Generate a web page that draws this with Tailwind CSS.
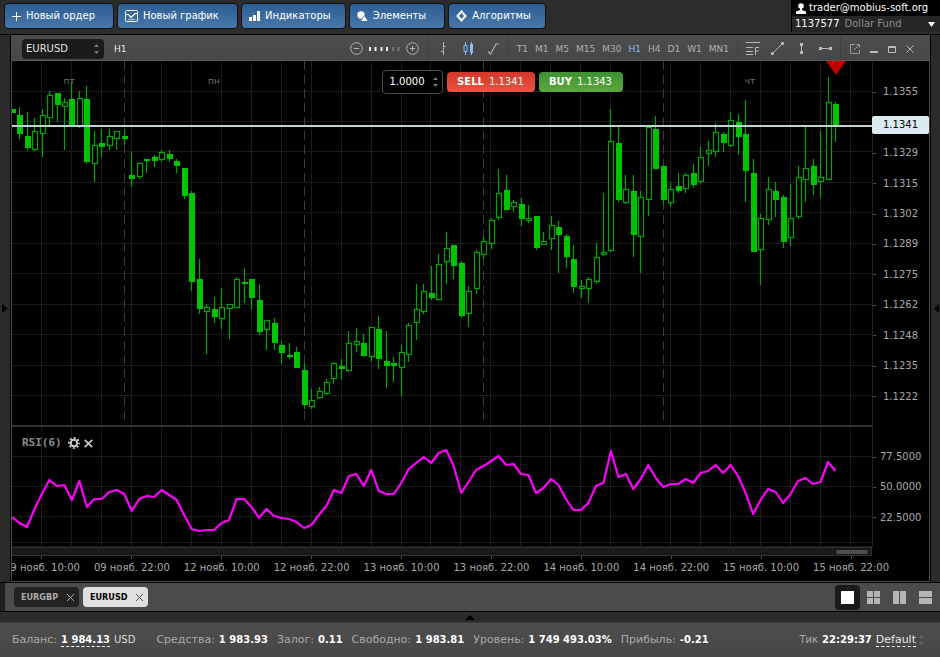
<!DOCTYPE html>
<html lang="ru">
<head>
<meta charset="utf-8">
<title>EURUSD, H1</title>
<script src="https://cdn.jsdelivr.net/npm/@tailwindcss/browser@4"></script>
</head>
<body class="bg-black">
<div class="flex h-screen flex-col overflow-hidden font-['DejaVu_Sans',sans-serif] text-[10px] leading-4 text-[#a8a8a8]">

  <!-- Top bar -->
  <header class="flex h-[35px] shrink-0 justify-between border-b border-black bg-[#2c2c2c]">
    <nav class="flex gap-[3px] pt-[3px] pl-1 text-[10px] text-white">
      <button class="flex h-[26px] items-center gap-[5px] rounded-sm border border-[#111] bg-linear-to-b from-[#2d5d92] to-[#4877ab] pr-[18px] pl-[7px]">
        <svg class="size-[9px]" viewBox="0 0 9 9" stroke="#fff" fill="none"><path d="M4.5 0v9M0 4.5h9"/></svg>Новый ордер</button>
      <button class="flex h-[26px] items-center gap-[5px] rounded-sm border border-[#111] bg-linear-to-b from-[#2d5d92] to-[#4877ab] pr-[18px] pl-[7px]">
        <svg class="h-3 w-[13px]" viewBox="0 0 13 12" stroke="#fff" fill="none"><rect x=".5" y=".5" width="12" height="11" rx="1"/><path d="M1 4.500h2.500l2.500 3 4-4H12" stroke-width="1.200"/><path d="M3 9.500h7" stroke="#a9c1da"/></svg>Новый график</button>
      <button class="flex h-[26px] items-center gap-[5px] rounded-sm border border-[#111] bg-linear-to-b from-[#2d5d92] to-[#4877ab] pr-[14px] pl-[7px]">
        <svg class="h-[10px] w-[11px]" viewBox="0 0 11 10" fill="#fff"><path d="M0 6h3v4H0zM4 4h3v6H4zM8 0h3v10H8z"/></svg>Индикаторы</button>
      <button class="flex h-[26px] items-center gap-[5px] rounded-sm border border-[#111] bg-linear-to-b from-[#2d5d92] to-[#4877ab] pr-[18px] pl-[7px]">
        <svg class="h-[10px] w-[11px]" viewBox="0 0 11 10"><circle cx="4" cy="4" r="3.7" fill="#fff"/><path d="M7.5 4.5 11.3 10.4H3.2z" fill="#fff" stroke="#3c6ca0" stroke-width=".8"/></svg>Элементы</button>
      <button class="flex h-[26px] items-center gap-[5px] rounded-sm border border-[#111] bg-linear-to-b from-[#2d5d92] to-[#4877ab] pr-[14px] pl-[7px]">
        <svg class="h-3 w-[11px]" viewBox="0 0 11 12" fill="none" stroke="#fff" stroke-width="2"><path d="M5.5 1.5 9.5 6l-4 4.5L1.5 6z"/></svg>Алгоритмы</button>
    </nav>
    <div class="flex h-8 w-[149px] flex-col border-l border-black bg-[#262626]">
      <div class="flex h-4 items-center gap-[3px] bg-black pl-1 text-white">
        <svg class="h-[11px] w-[10px] shrink-0" viewBox="0 0 10 11" fill="#fff"><circle cx="5" cy="3" r="2.8"/><path d="M4 5h2v2l4 1.5V11H0V8.500L4 7z"/></svg>
        <span class="whitespace-nowrap">trader@mobius-soft.org</span>
      </div>
      <button class="flex h-4 items-center gap-[5px] pr-[5px] pl-[3px] text-[#8e8e8e]"><span class="text-white">1137577</span><span>Dollar Fund</span>
        <svg class="ml-auto h-[5px] w-[7px]" viewBox="0 0 7 5" fill="#fff"><path d="M0 0h7L3.500 5z"/></svg></button>
    </div>
  </header>

  <!-- Workspace -->
  <main class="flex min-h-0 flex-1">
    <button aria-label="Показать левую панель" class="flex w-[11px] shrink-0 items-center border-r border-black bg-[#2b2b2b] pl-[2px]">
      <svg class="h-[9px] w-[6px]" viewBox="0 0 6 9"><path d="M0 0 6 4.500 0 9z"/></svg></button>

    <section class="flex min-w-0 flex-1 flex-col border-r border-b border-l border-[#4c4c4c] bg-black">
      <!-- Chart toolbar -->
      <div class="flex h-[26px] shrink-0 items-center border-b border-[#5a5a5a] bg-linear-to-b from-[#4d4d4d] to-[#474747] pt-[2px] pl-[10px]">
        <label class="relative flex h-5 w-[82px] rounded bg-[#1b1b1b] text-[10px] text-[#e0e0e0]">
          <select aria-label="Инструмент" class="w-full appearance-none bg-transparent pl-1"><option>EURUSD</option></select>
          <svg class="pointer-events-none absolute top-[5px] right-[5px] h-[10px] w-[5px]" viewBox="0 0 5 10" fill="#777"><path d="M0 3h5L2.500 0zM0 7h5L2.500 10z"/></svg>
        </label>
        <span class="pl-[10px] text-[9px] text-[#e8e8e8]">H1</span>

        <div class="ml-auto flex h-full items-center gap-[6px] pr-2">
          <button aria-label="Уменьшить"><svg class="size-[13px]" viewBox="0 0 13 13" fill="none" stroke="#b5b5b5"><circle cx="6.500" cy="6.500" r="5.800"/><path d="M4 6.500h5"/></svg></button>
          <svg class="h-1 w-[31px]" viewBox="0 0 31 4" fill="#eee"><path d="M0 0h2v4H0zM5.500 0h2v4h-2zM11.500 0h2v4h-2zM17 0h2v4h-2z"/><path fill="#777" d="M23 0h2v4h-2zM28.500 0h2v4h-2z"/></svg>
          <button aria-label="Увеличить"><svg class="size-[13px]" viewBox="0 0 13 13" fill="none" stroke="#b5b5b5"><circle cx="6.500" cy="6.500" r="5.800"/><path d="M4 6.500h5M6.500 4v5"/></svg></button>
        </div>
        <div class="flex h-full items-center gap-3 border-l border-[#404040] pr-2 pl-[9px]">
          <button aria-label="Бары"><svg class="h-[13px] w-[13px]" viewBox="0 0 13 13" fill="none" stroke="#b0b0b0"><path d="M6.500 0v13M4 9.500h2.500M6.500 4.500H9"/></svg></button>
          <button aria-label="Свечи"><svg class="h-[13px] w-[13px]" viewBox="0 0 13 13" fill="#86bdf7"><path d="M3 0h1v13H3zM9 0h1v13H9zM8 2h3v9H8z"/><path d="M2 3.500h3v6H2z" fill="#35516e" stroke="#86bdf7"/></svg></button>
          <button aria-label="Линия"><svg class="h-[13px] w-[13px]" viewBox="0 0 13 13" fill="none" stroke="#b0b0b0" stroke-width="1.200"><path d="M1 9.500 3.500 12 9 2l3 0"/></svg></button>
        </div>
        <div class="flex h-full items-center gap-[7px] border-l border-[#404040] px-2 text-[9px] text-[#b0b0b0]">
          <button>T1</button><button>M1</button><button>M5</button><button>M15</button><button>M30</button><button class="text-[#86bdf7]">H1</button><button>H4</button><button>D1</button><button>W1</button><button>MN1</button>
        </div>
        <div class="flex h-full items-center gap-[11px] border-l border-[#404040] px-2">
          <button aria-label="Фибоначчи"><svg class="h-[13px] w-[14px]" viewBox="0 0 14 13" fill="none" stroke="#b8b8b8"><path d="M0 .5h14M0 5.500h7M0 9.500h7M0 12.500h7M9.500 13V5.500H13M9.500 9H12.500"/></svg></button>
          <button aria-label="Линия тренда"><svg class="h-[13px] w-[13px]" viewBox="0 0 13 13" fill="#b8b8b8" stroke="#b8b8b8"><path d="M2 11 11 2"/><path d="M.5 10.500h2v2h-2zM10.500.5h2v2h-2z"/></svg></button>
          <button aria-label="Вертикальная линия"><svg class="h-[13px] w-[13px]" viewBox="0 0 13 13" fill="#b8b8b8"><path d="M6 1h1v11H6zM5 1h3v3H5zM5 9h3v3H5z"/></svg></button>
          <button aria-label="Горизонтальная линия"><svg class="h-[13px] w-[13px]" viewBox="0 0 13 13" fill="#b8b8b8"><path d="M0 6h13v1H0zM0 5h3v3H0zM10 5h3v3h-3z"/></svg></button>
        </div>
        <div class="flex h-full items-center gap-[10px] border-l border-[#404040] pr-[15px] pl-[9px]">
          <button aria-label="Открепить"><svg class="size-[10px]" viewBox="0 0 10 10" fill="none" stroke="#999"><path d="M5 .5H.5v9h9V6M4 6l5.500-5.500M6.500.5h3v3"/></svg></button>
          <button aria-label="Свернуть"><svg class="h-[10px] w-2" viewBox="0 0 8 10" fill="#bbb"><path d="M0 7h8v2H0z"/></svg></button>
          <button aria-label="Развернуть"><svg class="h-[10px] w-2" viewBox="0 0 8 10" fill="none" stroke="#bbb"><path d="M.5 2.500h7v6h-7zM0 3.500h8"/></svg></button>
          <button aria-label="Закрыть"><svg class="h-[10px] w-2" viewBox="0 0 8 10" fill="none" stroke="#b8b8b8"><path d="M.5 1.500l7 7M7.500 1.500l-7 7"/></svg></button>
        </div>
      </div>

      <!-- Plot and value axis -->
      <div class="relative flex min-h-0 flex-1">
        <div class="relative min-w-0 flex-1">
          <svg id="plot" class="absolute inset-0 block size-full" viewBox="12 61 860 486" preserveAspectRatio="none" role="img" aria-label="График EURUSD и RSI(6)"></svg>
          <!-- Weekday marks -->
          <span class="absolute top-3 left-[6%] text-[9px] text-[#707070]">пт</span>
          <span class="absolute top-3 left-[22.800%] text-[9px] text-[#707070]">пн</span>
          <span class="absolute top-3 left-[85.200%] text-[9px] text-[#707070]">чт</span>
          <!-- Quick order -->
          <div class="absolute inset-x-0 top-[9px] flex items-center justify-center gap-1 pl-[120px] text-[10px] text-white">
            <label class="relative flex h-6 w-[61px] items-center rounded border border-[#4a4a4a] bg-black">
              <input aria-label="Объём" value="1.0000" class="w-[46px] bg-transparent pl-[7px] outline-none">
              <svg class="pointer-events-none absolute top-[6px] right-1 h-[10px] w-[5px]" viewBox="0 0 5 10" fill="#777"><path d="M0 3h5L2.500 0zM0 7h5L2.500 10z"/></svg>
            </label>
            <button class="flex h-5 w-[88px] items-center justify-center gap-[5px] rounded-sm bg-linear-to-b from-[#d3362c] to-[#e8553c]"><b>SELL</b>1.1341</button>
            <button class="flex h-5 w-[84px] items-center justify-center gap-[5px] rounded-sm bg-linear-to-b from-[#3c9133] to-[#5da83c]"><b>BUY</b>1.1343</button>
          </div>
          <!-- Indicator heading -->
          <div class="absolute top-[77%] left-[10px] flex items-center gap-[6px] text-[11px] font-bold text-[#8c8c8c]">
            <span class="font-['DejaVu_Sans_Mono',monospace]">RSI(6)</span>
            <button aria-label="Настройки индикатора"><svg class="size-3" viewBox="0 0 12 12" fill="none" stroke="#c4c4c4"><circle cx="6" cy="6" r="3.200" stroke-width="2"/><circle cx="6" cy="6" r="5" stroke-width="2" stroke-dasharray="2 1.927" stroke-dashoffset="1"/></svg></button>
            <button aria-label="Удалить индикатор" class="-ml-[2px]"><svg class="size-[9px]" viewBox="0 0 9 9" stroke="#c4c4c4" stroke-width="1.800"><path d="M.8.8l7.400 7.400M8.200.8.8 8.200"/></svg></button>
          </div>
        </div>
        <div class="grid w-[57px] shrink-0 grid-rows-[365fr_121fr] border-l border-[#222]">
          <div id="price-axis" class="flex min-h-0 flex-col pt-4 pb-[14px]"></div>
          <div id="rsi-axis" class="flex min-h-0 flex-col pt-4 pb-[14px]"></div>
        </div>
        <div class="absolute top-[55px] right-0 flex h-[18px] w-[57px] items-center rounded-xs bg-[#dcebf0] pl-[11px] text-black">1.1341</div>
      </div>

      <!-- Scroll bar and time axis -->
      <div class="mr-[57px] flex h-[9px] shrink-0 items-center justify-end border-y border-r border-[#303030] bg-[#1a1a1a] pr-[3px]">
        <div class="h-1 w-8 rounded-xs bg-[#4d4d4d]"></div>
      </div>
      <div class="h-[25px] shrink-0 overflow-hidden">
        <div id="time-axis" class="-ml-[15px] mr-[33px] grid grid-cols-10 text-center text-[10px] leading-[18px] whitespace-nowrap"></div>
      </div>
    </section>

    <button aria-label="Показать правую панель" class="flex w-[10px] shrink-0 items-center justify-end border-l border-black bg-[#2b2b2b] pr-[1px]">
      <svg class="h-[9px] w-[5px]" viewBox="0 0 5 9"><path d="M5 0 0 4.500 5 9z"/></svg></button>
  </main>

  <!-- Chart tabs -->
  <div class="flex h-[30px] shrink-0 border-y border-black bg-[#1f1f1f] pl-[5px]">
  <div class="flex flex-1 items-center gap-1 bg-[#4b4b4b] pr-[2px] pl-[9px] font-['DejaVu_Sans_Condensed','DejaVu_Sans',sans-serif] text-[9px] font-bold">
    <button class="flex h-5 w-[65px] items-center justify-between rounded-sm bg-[#222] pr-[5px] pl-[7px] text-[#aaa]">EURGBP
      <svg class="size-[7px]" viewBox="0 0 7 7" stroke="#aaa"><path d="M0 0l7 7M7 0 0 7"/></svg></button>
    <button class="flex h-5 w-[65px] items-center justify-between rounded-sm bg-[#e0e0e0] pr-[5px] pl-[7px] text-black">EURUSD
      <svg class="size-[7px]" viewBox="0 0 7 7" stroke="#555"><path d="M0 0l7 7M7 0 0 7"/></svg></button>
    <div class="ml-auto flex items-center gap-[1px]">
      <button aria-label="Одно окно" class="flex size-[25px] items-center justify-center rounded-sm bg-[#1a1a1a]"><svg class="size-[13px]" viewBox="0 0 13 13" fill="#fff"><path d="M0 0h13v13H0z"/></svg></button>
      <button aria-label="Четыре окна" class="flex size-[25px] items-center justify-center"><svg class="size-[13px]" viewBox="0 0 13 13" fill="#b5b5b5"><path d="M0 0h6v6H0zM7 0h6v6H7zM0 7h6v6H0zM7 7h6v6H7z"/></svg></button>
      <button aria-label="Вертикально" class="flex size-[25px] items-center justify-center"><svg class="size-[13px]" viewBox="0 0 13 13" fill="#b5b5b5"><path d="M0 0h6v13H0zM7 0h6v13H7z"/></svg></button>
      <button aria-label="Горизонтально" class="flex size-[25px] items-center justify-center"><svg class="size-[13px]" viewBox="0 0 13 13" fill="#b5b5b5"><path d="M0 0h13v6H0zM0 7h13v6H0z"/></svg></button>
    </div>
  </div>
  </div>

  <button aria-label="Развернуть терминал" class="flex h-[11px] shrink-0 items-center justify-center border-b border-[#3a3a3a] bg-[#2b2b2b]">
    <svg class="h-[5px] w-[10px]" viewBox="0 0 10 5"><path d="M0 5h10L5 0z"/></svg></button>

  <!-- Account status -->
  <footer class="flex h-[34px] shrink-0 items-center gap-[9px] bg-linear-to-b from-[#4d4d4d] to-[#474747] pr-4 pl-3 whitespace-nowrap text-[#aaa]">
    <div class="mr-3 flex items-center gap-1"><span class="text-[11px]">Баланс:</span><a href="#" class="border-b border-dashed border-white leading-3 font-bold text-white">1 984.13</a><span class="text-[#ddd]">USD</span></div>
    <div class="flex items-center gap-1"><span class="text-[11px]">Средства:</span><b class="text-white">1 983.93</b></div>
    <div class="flex items-center gap-1"><span class="text-[11px]">Залог:</span><b class="text-white">0.11</b></div>
    <div class="flex items-center gap-1"><span class="text-[11px]">Свободно:</span><b class="text-white">1 983.81</b></div>
    <div class="flex items-center gap-1"><span class="text-[11px]">Уровень:</span><b class="text-white">1 749 493.03%</b></div>
    <div class="flex items-center gap-1"><span class="text-[11px]">Прибыль:</span><b class="text-white">-0.21</b></div>
    <div class="ml-auto flex items-center gap-1"><span>Тик</span><b class="text-white">22:29:37</b>
      <button class="flex items-center gap-[3px]"><span class="border-b border-dashed border-white text-[11px] leading-[13px] text-[#e8e8e8]">Default</span>
        <svg class="h-[10px] w-[5px]" viewBox="0 0 5 10" fill="#666"><path d="M0 3h5L2.500 0zM0 7h5L2.500 10z"/></svg></button></div>
  </footer>
</div>

<script>
// Candles: high, low, body top, body bottom, filled (plot units)
const candles = [
[109,113,109,113,1],[107,139,115,134,1],[112,151,136,148,1],[118,151,131,150,0],[109,157,115,134,0],[91,125,95,118,0],[93,122,93,105,1],[98,150,102,107,0],[81,125,99,125,1],[91,128,98,127,0],
[86,164,99,162,1],[131,182,145,164,0],[129,157,143,147,1],[129,150,136,146,0],[131,150,131,139,0],[129,145,136,139,1],[152,187,175,179,1],[162,179,163,177,0],[159,173,159,161,1],[155,167,157,161,1],
[150,162,152,160,0],[150,162,154,159,1],[159,173,161,166,1],[168,199,168,196,1],[191,291,193,282,1],[259,314,279,309,1],[304,354,307,312,0],[297,323,309,317,1],[288,329,307,319,0],[304,339,304,309,0],
[277,308,279,308,0],[268,303,282,284,1],[279,310,279,298,1],[284,335,300,332,1],[320,350,320,330,0],[318,350,323,343,1],[341,364,345,353,1],[343,359,355,357,1],[347,368,352,368,1],[363,409,370,405,1],
[389,409,400,407,0],[387,399,391,398,0],[379,395,382,394,0],[362,384,363,379,0],[359,380,366,369,1],[331,372,343,371,0],[328,352,341,345,0],[334,357,343,356,1],[327,362,327,357,0],[316,369,329,359,1],
[331,388,361,366,1],[357,382,363,366,1],[345,396,352,368,0],[323,362,325,355,0],[284,340,309,323,0],[284,314,291,312,0],[266,300,293,298,1],[254,300,264,300,0],[232,284,248,262,0],[245,279,245,266,1],
[261,318,263,316,1],[286,327,291,314,0],[250,294,252,289,0],[237,259,241,255,0],[218,249,220,244,0],[169,220,193,218,0],[175,210,190,210,1],[200,212,202,207,0],[198,226,204,219,1],[205,223,218,221,0],
[216,250,216,248,1],[232,245,241,245,0],[216,250,225,239,0],[221,273,227,235,1],[234,268,236,257,1],[245,293,259,287,1],[280,298,286,289,0],[277,303,279,289,0],[243,284,257,282,0],[193,256,252,255,0],
[109,252,141,251,0],[127,202,143,200,1],[175,204,189,203,0],[175,257,191,235,1],[191,273,197,237,0],[126,216,127,200,0],[116,169,129,169,1],[165,205,166,200,1],[182,207,189,203,0],[173,193,186,191,1],
[173,193,175,189,0],[164,188,173,185,1],[146,184,157,182,0],[141,166,150,154,0],[123,157,132,152,0],[132,152,134,143,1],[112,147,120,146,0],[114,155,122,137,1],[100,202,134,171,1],[159,252,173,252,1],
[214,285,218,250,0],[177,225,189,220,0],[182,217,191,200,1],[195,248,197,242,1],[184,246,218,238,0],[166,219,177,217,0],[127,202,168,180,0],[159,195,166,185,1],[131,198,177,182,0],[77,180,102,180,0],
[102,142,104,125,1]];
const rsi = [517,523,527,509,494,480,486,485,500,481,507,499,499,492,490,494,511,499,496,497,490,495,500,515,529,531,530,530,523,520,499,499,507,518,509,516,518,519,522,528,
525,515,506,490,493,476,474,486,470,491,494,494,483,469,463,457,463,453,450,466,493,482,470,466,461,456,465,464,474,475,493,488,479,485,499,510,510,503,486,483,
451,477,474,489,479,465,478,487,484,484,479,483,473,471,465,473,465,476,493,514,500,489,492,503,494,481,478,484,482,462,471];
const X = i => 12 + i * 7.486;
let s = '<g stroke="#1b1b1b">';
for (let i = 0; i < 28; i++) { const x = Math.floor(41.6 + i * 29.95) + .5; s += `<path d="M${x} 61V547"/>`; }
for (let i = 0; i < 11; i++) { const y = Math.floor(91 + i * 30.45) + .5; s += `<path d="M12 ${y}H872"/>`; }
for (const y of [456, 486, 516, 542, 546]) s += `<path d="M12 ${y}.5H872"/>`;
s += '</g><g stroke="#3c3c3c" stroke-dasharray="9 5">';
for (const x of [124, 304, 483, 663]) s += `<path d="M${x}.5 61V422"/>`;
s += '</g><path d="M12 426H872" stroke="#333" stroke-width="2"/>';
candles.forEach(([h, l, t, b, f], i) => {
  const x = Math.round(X(i) - .4);
  s += `<path d="M${x + .5} ${h}V${t}M${x + .5} ${b}V${l}" stroke="#00a600" stroke-width="1.2"/>`;
  s += f ? `<rect x="${x - 2}" y="${t}" width="6" height="${b - t}" fill="#00c400"/>`
         : `<rect x="${x - 1.5}" y="${t + .5}" width="5" height="${Math.max(b - t - 1, 1)}" fill="#000" stroke="#00a600" stroke-width="1.2"/>`;
});
s += '<path d="M12 126H872" stroke="#c3d3d3" stroke-width="2"/>';
s += '<path d="M826 61H846L836 75z" fill="#c00000"/>';
s += `<polyline fill="none" stroke="#f0f" stroke-width="2.2" stroke-linejoin="round" points="${rsi.map((y, i) => X(i).toFixed(1) + ',' + y).join(' ')}"/>`;
document.getElementById('plot').innerHTML = s;

const tick = (t, pad) => `<div class="flex flex-1 items-center ${pad}">${t ? '<i class="h-px w-[3px] bg-[#555]"></i>' + t : ''}</div>`;
document.getElementById('price-axis').innerHTML = ['1.1355','','1.1329','1.1315','1.1302','1.1289','1.1275','1.1262','1.1248','1.1235','1.1222'].map(t => tick(t, 'gap-[7px]')).join('');
document.getElementById('rsi-axis').innerHTML = ['77.5000','50.0000','22.5000'].map(t => tick(t, 'gap-1')).join('');
document.getElementById('time-axis').innerHTML = ['09','12','13','14','15'].flatMap(d => [d + ' нояб. 10:00', d + ' нояб. 22:00'])
  .map(t => `<div class="flex flex-col items-center"><i class="h-[3px] w-px bg-[#555]"></i><span>${t}</span></div>`).join('');
</script>
</body>
</html>
